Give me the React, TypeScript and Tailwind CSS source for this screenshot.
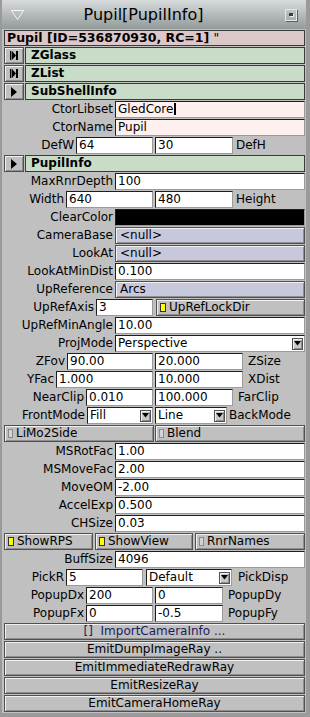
import type { ReactNode } from 'react';

// FLTK-ish box styles
const raised = 'border border-[#505050] shadow-[inset_1px_1px_0_#f0f0f0,inset_-1px_-1px_0_#8e8e8e]';
const sunken = 'border border-t-[#1e1e1e] border-l-[#1e1e1e] border-b-[#9a9a9a] border-r-[#9a9a9a]';

const Row = ({ children }: { children: ReactNode }) => (
  <div className="flex h-[18px] items-start">{children}</div>
);

const Lbl = ({ className = '', children }: { className?: string; children: ReactNode }) => (
  <div className={`shrink-0 whitespace-nowrap pr-[2px] text-right leading-[17px] ${className}`}>{children}</div>
);

const Input = ({ value, className = '', pink = false }: { value: ReactNode; className?: string; pink?: boolean }) => (
  <div
    className={`h-[17px] shrink-0 overflow-hidden whitespace-nowrap pl-[2px] leading-[15px] ${sunken} ${pink ? 'bg-[#fff0f0]' : 'bg-white'} ${className}`}
  >
    {value}
  </div>
);

const Arrow = () => (
  <div className={`flex h-[12px] w-[11px] shrink-0 items-center justify-center bg-[#c8c8c8] ${raised}`}>
    <svg width="7" height="5" viewBox="0 0 7 5">
      <polygon points="0,0 7,0 3.5,4.5" fill="#000" />
    </svg>
  </div>
);

const Select = ({ value, className = '' }: { value: string; className?: string }) => (
  <div className={`flex h-[17px] shrink-0 items-center bg-white pl-[2px] pr-[1px] leading-[15px] ${sunken} ${className}`}>
    <span className="flex-1 overflow-hidden whitespace-nowrap">{value}</span>
    <Arrow />
  </div>
);

const Field = ({ label, children }: { label: string; children: ReactNode }) => (
  <Row>
    <Lbl className="w-[111px]">{label}</Lbl>
    <div className="flex-1">{children}</div>
  </Row>
);

const Obj = ({ value }: { value: string }) => (
  <div className={`h-[17px] bg-[#c8c8dc] pl-[4px] leading-[15px] ${raised}`}>{value}</div>
);

const Check = ({ on }: { on: boolean }) =>
  on ? (
    <span className="mr-[3px] inline-block h-[9px] w-[6px] shrink-0 border border-[#303030] bg-[#ffff00]" />
  ) : (
    <span className="mr-[3px] inline-block h-[9px] w-[5px] shrink-0 border border-[#8a8a8a] bg-[#d4d4d4]" />
  );

const Toggle = ({ on, label, className = '' }: { on: boolean; label: string; className?: string }) => (
  <div className={`flex h-[17px] items-center whitespace-nowrap bg-[#c0c0c0] pl-[3px] leading-[15px] ${raised} ${className}`}>
    <Check on={on} />
    {label}
  </div>
);

const Btn = ({ children, className = '' }: { children: ReactNode; className?: string }) => (
  <Row>
    <div className={`h-[17px] flex-1 bg-[#c0c0c0] text-center leading-[15px] ${raised} ${className}`}>{children}</div>
  </Row>
);

const Header = ({ icon, title }: { icon: 'end' | 'play'; title: string }) => (
  <Row>
    <div className={`flex h-[17px] w-[20px] shrink-0 items-center justify-center bg-[#c0c0c0] ${raised}`}>
      {icon === 'end' ? (
        <svg width="8" height="9" viewBox="0 0 8 9">
          <rect x="0" y="0" width="1.4" height="9" fill="#000" />
          <polygon points="2,0 6,4.5 2,9" fill="#000" />
          <rect x="6" y="0" width="2" height="9" fill="#000" />
        </svg>
      ) : (
        <svg width="6" height="10" viewBox="0 0 6 10">
          <polygon points="0,0 6,5 0,10" fill="#000" />
        </svg>
      )}
    </div>
    <div className="ml-[1px] h-[17px] flex-1 border border-[#3a3a3a] bg-[#c8dcc8] pl-[5px] text-[12px] font-bold leading-[15px]">
      {title}
    </div>
  </Row>
);

type PairProps = {
  label: string;
  lw: string;
  a: ReactNode;
  aw: string;
  b: ReactNode;
  bw: string;
  label2: string;
  pl: string;
};

const Pair = ({ label, lw, a, aw, b, bw, label2, pl }: PairProps) => (
  <Row>
    <Lbl className={lw}>{label}</Lbl>
    <Input className={aw} value={a} />
    <Input className={`ml-[2px] ${bw}`} value={b} />
    <div className={`flex-1 whitespace-nowrap leading-[17px] ${pl}`}>{label2}</div>
  </Row>
);

export default function App() {
  return (
    <div className="h-[717px] w-[310px] overflow-hidden bg-[#c0c0c0] font-['DejaVu_Sans',sans-serif] text-[12px] text-black">
      <div className="flex h-full flex-col border-b-[4px] border-l-[2px] border-r-[4px] border-[#9a9a9a]">
        {/* title bar */}
        <div className="relative flex h-[29px] shrink-0 items-center bg-linear-to-b from-[#d8dbdb] to-[#939b9b]">
          <svg className="absolute left-[9px] top-[10px]" width="13" height="10" viewBox="0 0 13 10">
            <polygon points="0.5,0.5 12.5,0.5 6.5,9.5" fill="none" stroke="#f4f4f4" strokeWidth="1" />
          </svg>
          <div className="flex-1 pt-[1px] text-center text-[16px] leading-[20px]">Pupil[PupilInfo]</div>
          <div className="flex w-[21px] shrink-0 items-center">
            <div className="relative h-[12px] w-[12px] border border-[#e6e6e6] shadow-[1px_1px_0_#5a6060]">
              <span className="absolute left-[3px] top-[3px] h-[3px] w-[4px] bg-[#3a3a3a] shadow-[1px_1px_0_#f0f0f0]" />
            </div>
          </div>
        </div>

        <div className="flex flex-col pl-[2px] pr-[1px]">
          <Row>
            <div className="mt-[1px] h-[16px] flex-1 border border-[#3a3a3a] bg-[#dcc8c8] pl-[2px] text-[12.5px] font-bold leading-[14px]">
              Pupil [ID=536870930, RC=1] <span className="font-normal">"</span>
            </div>
          </Row>
          <Header icon="end" title="ZGlass" />
          <Header icon="end" title="ZList" />
          <Header icon="play" title="SubShellInfo" />
          <Field label="CtorLibset">
            <Input
              pink
              value={
                <>
                  GledCore
                  <span className="ml-[1px] inline-block h-[12px] w-[2px] bg-black align-[-2px]" />
                </>
              }
            />
          </Field>
          <Field label="CtorName">
            <Input pink value="Pupil" />
          </Field>
          <Pair label="DefW" lw="w-[72px]" a="64" aw="w-[77px]" b="30" bw="w-[78px]" label2="DefH" pl="pl-[3px]" />
          <Header icon="play" title="PupilInfo" />
          <Field label="MaxRnrDepth">
            <Input value="100" />
          </Field>
          <Pair label="Width" lw="w-[62px]" a="640" aw="w-[87px]" b="480" bw="w-[78px]" label2="Height" pl="pl-[3px]" />
          <Field label="ClearColor">
            <div className={`h-[17px] bg-black ${sunken}`} />
          </Field>
          <Field label="CameraBase">
            <Obj value="<null>" />
          </Field>
          <Field label="LookAt">
            <Obj value="<null>" />
          </Field>
          <Field label="LookAtMinDist">
            <Input value="0.100" />
          </Field>
          <Field label="UpReference">
            <Obj value="Arcs" />
          </Field>
          <Row>
            <Lbl className="w-[92px]">UpRefAxis</Lbl>
            <Input className="w-[57px]" value="3" />
            <Toggle on label="UpRefLockDir" className="ml-[3px] flex-1" />
          </Row>
          <Field label="UpRefMinAngle">
            <Input value="10.00" />
          </Field>
          <Field label="ProjMode">
            <Select value="Perspective" />
          </Field>
          <Pair label="ZFov" lw="w-[63px]" a="90.00" aw="w-[86px]" b="20.000" bw="w-[88px]" label2="ZSize" pl="pl-[5px]" />
          <Pair label="YFac" lw="w-[52px]" a="1.000" aw="w-[97px]" b="10.000" bw="w-[88px]" label2="XDist" pl="pl-[5px]" />
          <Pair label="NearClip" lw="w-[82px]" a="0.010" aw="w-[67px]" b="100.000" bw="w-[78px]" label2="FarClip" pl="pl-[5px]" />
          <Row>
            <Lbl className="w-[83px]">FrontMode</Lbl>
            <Select className="w-[66px]" value="Fill" />
            <Select className="ml-[2px] w-[72px]" value="Line" />
            <div className="flex-1 whitespace-nowrap pl-[2px] leading-[17px]">BackMode</div>
          </Row>
          <Row>
            <Toggle on={false} label="LiMo2Side" className="w-[150px]" />
            <Toggle on={false} label="Blend" className="ml-[1px] flex-1" />
          </Row>
          <Field label="MSRotFac">
            <Input value="1.00" />
          </Field>
          <Field label="MSMoveFac">
            <Input value="2.00" />
          </Field>
          <Field label="MoveOM">
            <Input value="-2.00" />
          </Field>
          <Field label="AccelExp">
            <Input value="0.500" />
          </Field>
          <Field label="CHSize">
            <Input value="0.03" />
          </Field>
          <Row>
            <Toggle on label="ShowRPS" className="w-[89px]" />
            <Toggle on label="ShowView" className="ml-[2px] w-[98px]" />
            <Toggle on={false} label="RnrNames" className="ml-[2px] flex-1" />
          </Row>
          <Field label="BuffSize">
            <Input value="4096" />
          </Field>
          <Row>
            <Lbl className="w-[62px]">PickR</Lbl>
            <Input className="w-[77px]" value="5" />
            <Select className="ml-[3px] w-[86px]" value="Default" />
            <div className="flex-1 whitespace-nowrap pl-[6px] leading-[17px]">PickDisp</div>
          </Row>
          <Pair label="PopupDx" lw="w-[82px]" a="200" aw="w-[67px]" b="0" bw="w-[68px]" label2="PopupDy" pl="pl-[5px]" />
          <Pair label="PopupFx" lw="w-[82px]" a="0" aw="w-[67px]" b="-0.5" bw="w-[68px]" label2="PopupFy" pl="pl-[5px]" />
          <Btn className="text-[#1c1c5c]">[]&nbsp;&nbsp;ImportCameraInfo ...</Btn>
          <Btn>EmitDumpImageRay ..</Btn>
          <Btn>EmitImmediateRedrawRay</Btn>
          <Btn>EmitResizeRay</Btn>
          <Btn>EmitCameraHomeRay</Btn>
        </div>
      </div>
    </div>
  );
}
